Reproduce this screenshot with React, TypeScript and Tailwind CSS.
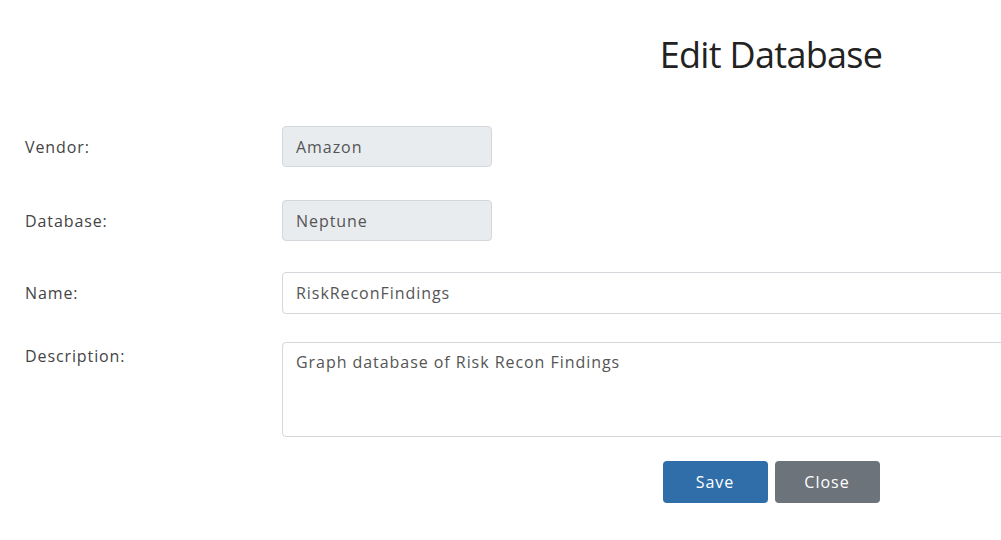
const App = () => {
  return (
    <div className="h-[540px] w-[1001px] overflow-hidden bg-white font-['Open_Sans',sans-serif]">
      <div className="w-[1542px]">
        <h1 className="pt-[31px] text-center text-[36px] leading-[48px] tracking-[-0.7px] text-[#222]">Edit Database</h1>

        <div className="mt-[47px] flex flex-col px-[25px]">
          <div className="flex items-center">
            <label className="w-[257px] text-base tracking-[0.9px] text-[#444]">Vendor:</label>
            <input
              disabled
              value="Amazon"
              className="h-[41px] w-[210px] rounded border border-[#d4d7db] bg-[#e9ecef] px-[13px] text-base tracking-[0.95px] text-[#555]"
            />
          </div>

          <div className="mt-[33px] flex items-center">
            <label className="w-[257px] text-base tracking-[0.9px] text-[#444]">Database:</label>
            <input
              disabled
              value="Neptune"
              className="h-[41px] w-[210px] rounded border border-[#d4d7db] bg-[#e9ecef] px-[13px] text-base tracking-[0.95px] text-[#555]"
            />
          </div>

          <div className="mt-[31px] flex items-center">
            <label className="w-[257px] text-base tracking-[0.9px] text-[#444]">Name:</label>
            <input
              defaultValue="RiskReconFindings"
              className="h-[42px] flex-1 rounded border border-[#d4d7db] bg-white px-[13px] text-base tracking-[0.95px] text-[#555]"
            />
          </div>

          <div className="mt-[28px] flex items-start">
            <label className="w-[257px] pt-[2px] text-base tracking-[0.9px] text-[#444]">Description:</label>
            <textarea
              defaultValue="Graph database of Risk Recon Findings"
              className="h-[95px] flex-1 resize-none rounded border border-[#d4d7db] bg-white px-[13px] py-[7px] text-base tracking-[0.95px] text-[#555]"
            />
          </div>
        </div>

        <div className="mt-[24px] flex justify-center gap-[7px]">
          <button className="h-[42px] w-[105px] rounded bg-[#2f6ea9] text-base tracking-[1px] text-white">Save</button>
          <button className="h-[42px] w-[105px] rounded bg-[#6c737b] text-base tracking-[1px] text-white">Close</button>
        </div>
      </div>
    </div>
  )
}

export default App
